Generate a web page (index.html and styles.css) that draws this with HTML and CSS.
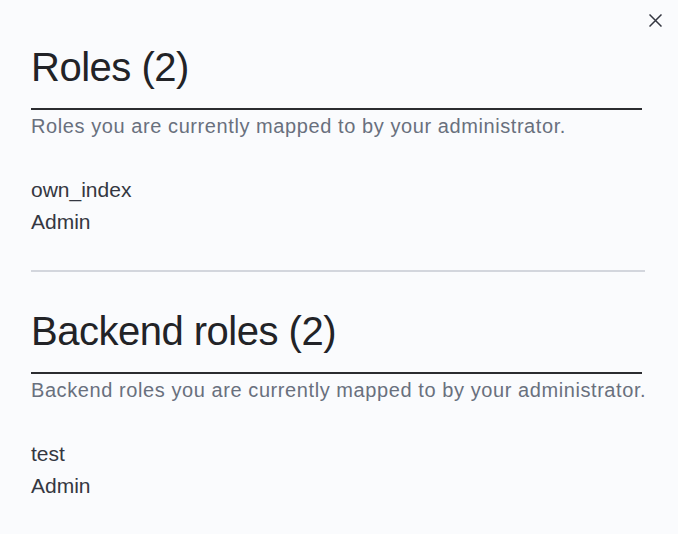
FILE: index.html
```html
<!DOCTYPE html>
<html lang="en">
<head>
<meta charset="utf-8">
<title>Roles</title>
<link rel="stylesheet" href="styles.css">
</head>
<body>
<div class="flyout">
  <button class="close" aria-label="Close">
    <svg width="13" height="13" viewBox="0 0 13 13"><path d="M0.5 0.5 L12.5 12.5 M12.5 0.5 L0.5 12.5" stroke="#343741" stroke-width="1.5" fill="none"/></svg>
  </button>
  <section class="section">
    <h2 class="title">Roles (2)</h2>
    <p class="desc">Roles you are currently mapped to by your administrator.</p>
    <ul class="list">
      <li>own_index</li>
      <li>Admin</li>
    </ul>
  </section>
  <hr class="sep">
  <section class="section">
    <h2 class="title">Backend roles (2)</h2>
    <p class="desc">Backend roles you are currently mapped to by your administrator.</p>
    <ul class="list">
      <li>test</li>
      <li>Admin</li>
    </ul>
  </section>
</div>
</body>
</html>
```
FILE: styles.css
```css
html, body {
  margin: 0;
  padding: 0;
  background: #fafbfd;
}
body {
  width: 678px;
  height: 534px;
  overflow: hidden;
  font-family: "Liberation Sans", Arial, sans-serif;
}
.flyout {
  position: relative;
  padding: 43px 33px 0 31px;
}
.close {
  position: absolute;
  top: 14px;
  left: 649px;
  width: 13px;
  height: 13px;
  padding: 0;
  border: 0;
  background: none;
  display: block;
}
.close svg { display: block; }
.section { display: flex; flex-direction: column; }
.title {
  margin: 0 3px 0 0;
  font-weight: 400;
  font-size: 40px;
  line-height: 48px;
  letter-spacing: -0.5px;
  color: #222327;
  padding-bottom: 17px;
  border-bottom: 2px solid #2b2c30;
}
.desc {
  margin: 4px 0 0;
  font-size: 20px;
  line-height: 24px;
  letter-spacing: 0.58px;
  color: #69707d;
  white-space: nowrap;
}
.list {
  list-style: none;
  margin: 36px 0 0;
  padding: 0;
  font-size: 21px;
  line-height: 32px;
  color: #343741;
}
.sep {
  margin: 32px 0 35px;
  border: 0;
  height: 2px;
  background: #d3d6dd;
}
```
